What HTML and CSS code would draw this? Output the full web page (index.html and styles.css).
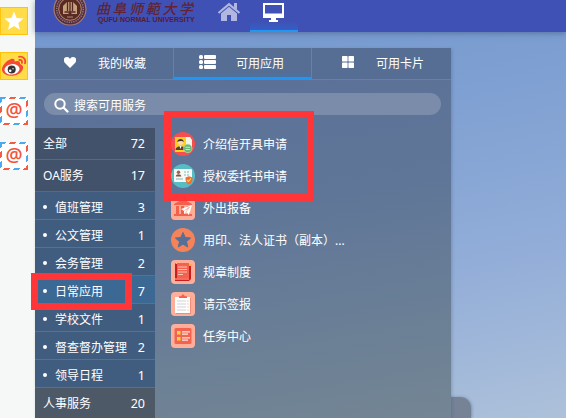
FILE: index.html
```html
<!DOCTYPE html>
<html lang="zh-CN">
<head>
<meta charset="utf-8">
<title>曲阜师范大学</title>
<link rel="stylesheet" href="styles.css">
</head>
<body>
<aside class="rail">
  <svg class="tile" viewBox="0 0 28 28"><rect x=".5" y=".5" width="27" height="27" fill="#ffdc48" stroke="#ffc20d"/><path d="M14 4.500l2.700 6.400 6.800.5-5.200 4.500 1.600 6.800-5.900-3.600-5.900 3.600 1.600-6.800-5.200-4.500 6.800-.5z" fill="#fff"/></svg>
  <svg class="tile" viewBox="0 0 28 28"><rect x=".5" y=".5" width="27" height="27" fill="#ffdc48" stroke="#ffc20d"/><path d="M11 7c2.500-1 4 .3 3.600 2.600 3-1.200 6-.8 5.400 2.400 3 1 4 3.300 2.500 6-2 4-7 6-12 5.700C5 23.500 1.500 20.500 2 16.800 2.600 12.800 7 8.300 11 7z" fill="#f44c32"/><ellipse cx="12" cy="17.300" rx="7.600" ry="5.200" fill="#fff" transform="rotate(-8 12 17.300)"/><circle cx="11.700" cy="17.500" r="4" fill="#333"/><circle cx="10.200" cy="18.800" r="1.300" fill="#fff"/><circle cx="13" cy="16.800" r=".7" fill="#fff"/><path d="M19 4.800c4.300-.7 7.200 2.500 6 6.500M19.300 8c2.200-.3 3.200 1 2.600 2.900" fill="none" stroke="#f44c32" stroke-width="1.800" stroke-linecap="round"/></svg>
  <div class="mail">@</div>
  <div class="mail">@</div>
</aside>
<div class="app">
  <header class="top">
    <svg class="seal" viewBox="0 0 34 34"><circle cx="17" cy="17" r="16" fill="#542b42" stroke="#a77b6a" stroke-width="1.200"/><circle cx="17" cy="17" r="13.300" fill="none" stroke="#95766b" stroke-width="1.500" stroke-dasharray="1.300 1"/><circle cx="17" cy="17" r="11.300" fill="#5a2922" stroke="#b18b70" stroke-width="1"/><path d="M10 22V14l4-4h6l4 4v8h-5l-2-2-2 2z" fill="#c7a17c"/><path d="M14.500 10v9M19.500 10v9M17 9v12M11.500 20h11" stroke="#552922" stroke-width="1.300"/><path d="M14 25h6" stroke="#b18b70"/></svg>
    <div class="brand"><div class="brand-cn">曲阜师範大学</div><div class="brand-en">QUFU NORMAL UNIVERSITY</div></div>
    <nav class="views">
      <a class="view"><svg class="home" viewBox="0 0 24 20"><path d="M1.500 11L12 2.200 22.500 11" fill="none" stroke="#b1b7e0" stroke-width="2.200"/><path d="M17 1h3v7l-3-2.500z" fill="#b1b7e0"/><path d="M4 11.500l8-6.700 8 6.700V19h-6v-6h-4v6H4z" fill="#b1b7e0"/></svg></a>
      <a class="view view-on"><svg class="screen" viewBox="0 0 21 19"><path fill="#fff" fill-rule="evenodd" d="M0 0h21v15h-8v2h2v2H6v-2h2v-2H0zM2 2v8.500h17V2z"/></svg></a>
    </nav>
  </header>
  <main class="stage">
    <div class="drawer"></div>
    <section class="panel">
      <div class="tabs">
        <div class="tab"><svg class="tab-icon heart" viewBox="0 0 12 11"><path d="M6 11L1 6C-1.300 3 0 .2 2.800.1 4.500 0 5.400.8 6 2 6.600.8 7.500 0 9.200.1 12 .2 13.300 3 11 6z" fill="#fff"/></svg><span>我的收藏</span></div>
        <div class="tab tab-on"><svg class="tab-icon bars" viewBox="0 0 17 14"><g fill="#fff"><rect width="4" height="4" rx="1.500"/><rect x="5" width="12" height="4" rx="1"/><rect y="5" width="4" height="4" rx="1.500"/><rect x="5" y="5" width="12" height="4" rx="1"/><rect y="10" width="4" height="4" rx="1.500"/><rect x="5" y="10" width="12" height="4" rx="1"/></g></svg><span>可用应用</span></div>
        <div class="tab"><svg class="tab-icon grid" viewBox="0 0 12 12"><g fill="#fff"><rect width="5.600" height="5.600" rx=".7"/><rect x="6.400" width="5.600" height="5.600" rx=".7"/><rect y="6.400" width="5.600" height="5.600" rx=".7"/><rect x="6.400" y="6.400" width="5.600" height="5.600" rx=".7"/></g></svg><span>可用卡片</span></div>
      </div>
      <div class="search"><svg class="glass" viewBox="0 0 15 15"><circle cx="6" cy="6" r="4.700" fill="none" stroke="#fff" stroke-width="2"/><path d="M9.500 9.500L13.500 13.500" stroke="#fff" stroke-width="2.300" stroke-linecap="round"/></svg><span>搜索可用服务</span></div>
      <div class="body">
        <ul class="cats">
          <li class="cat"><span>全部</span><b>72</b></li>
          <li class="cat"><span>OA服务</span><b>17</b></li>
          <li class="cat sub"><span>值班管理</span><b>3</b></li>
          <li class="cat sub"><span>公文管理</span><b>1</b></li>
          <li class="cat sub"><span>会务管理</span><b>2</b></li>
          <li class="cat sub cat-on"><span>日常应用</span><b>7</b></li>
          <li class="cat sub"><span>学校文件</span><b>1</b></li>
          <li class="cat sub"><span>督查督办管理</span><b>2</b></li>
          <li class="cat sub"><span>领导日程</span><b>1</b></li>
          <li class="cat last"><span>人事服务</span><b>20</b></li>
        </ul>
        <ul class="apps">
          <li class="item"><svg viewBox="0 0 24 24"><circle cx="12" cy="12" r="12" fill="#f44e50"/><path d="M15 5h4l2 3v9h-6z" fill="#f3f5e8"/><rect x="4" y="5" width="11" height="15" fill="#fbd119"/><circle cx="9.500" cy="10" r="3" fill="#ffd5ac"/><path d="M6.300 10c-.3-4 6.700-4 6.400 0-1-1.500-4.500-1.500-6.400 0z" fill="#4c2d27"/><path d="M4.500 18c0-5 10-5 10 0z" fill="#5c3c36"/><path d="M8.500 14h2l-1 3z" fill="#fff"/><circle cx="16.800" cy="16.500" r="4.200" fill="#65b878" stroke="#b2dba8" stroke-width=".8"/><path d="M14.500 15.300h4.600M14.500 17.500h4.600" stroke="#c6e8cb"/></svg><span>介绍信开具申请</span></li>
          <li class="item"><svg viewBox="0 0 24 24"><circle cx="12" cy="12" r="12" fill="#58bcc5"/><rect x="3" y="5" width="18" height="13" rx="1" fill="#f5faf7"/><circle cx="7.500" cy="8.300" r="1.700" fill="#a3623e"/><path d="M4.800 12.500c0-3 5.500-3 5.500 0z" fill="#89513a"/><path d="M13 8h2m1 0h2M13 11h2m1 0h2M5 15h7" stroke="#a8cdd1" stroke-width="1.300"/><path d="M18 12.300l3.500 1.300c.2 4-1 6-3.500 7-2.500-1-3.700-3-3.500-7z" fill="#f26e2f"/><path d="M16 16l1.500 1.500 2.500-3" fill="none" stroke="#fde052" stroke-width="1.100"/></svg><span>授权委托书申请</span></li>
          <li class="item"><svg viewBox="0 0 24 24"><rect width="24" height="24" rx="4" fill="#ffac96"/><path d="M3 8l9-5 9 5v1H3zM5 10h3v8H5zM10 10h3v8h-3zM16 10h3v8h-3zM3 18h18v2H3z" fill="#f3604c"/><path d="M10 13l11-4-3 10-3-3-2 2v-3z" fill="#fff"/><path d="M13.500 14.500l5-3.500-3.500 5" fill="none" stroke="#f69b87" stroke-width=".7"/></svg><span>外出报备</span></li>
          <li class="item"><svg viewBox="0 0 24 24"><circle cx="12" cy="12" r="12" fill="#f4835a"/><path d="M12 4.500l2.200 5 5.400.5-4.100 3.600 1.200 5.400-4.700-2.900L7.300 19l1.200-5.400L4.400 10l5.400-.5z" fill="#556f96" stroke="#556f96" stroke-linejoin="round"/></svg><span>用印、法人证书（副本）...</span></li>
          <li class="item"><svg viewBox="0 0 24 24"><rect width="24" height="24" rx="4" fill="#ffae99"/><path d="M5 4h15v15l-2 2H4V3z" fill="#ca1d1e"/><path d="M6 3h12v15H6z" fill="#f4614e"/><path d="M4 19h14" stroke="#ff8a71" stroke-width="1.500"/><path d="M7 7h9M7 9.500h9M7 12h9M7 14.500h5" stroke="#ffc3b1"/><path d="M18 4h3v2h-3z" fill="#ffb534"/></svg><span>规章制度</span></li>
          <li class="item"><svg viewBox="0 0 24 24"><rect width="24" height="24" rx="4" fill="#ffae99"/><rect x="5" y="6" width="15" height="16" fill="#f38d79"/><rect x="4" y="5" width="15" height="16" fill="#fff"/><path d="M8 6V4.300h2L12 2l2 2.300h2V6z" fill="#f3614a"/><path d="M6 9h9M6 12h9M6 15h9M6 18h9" stroke="#d1d0d3" stroke-width="1.200"/><path d="M16.500 9h1M16.500 12h1M16.500 15h1M16.500 18h1" stroke="#f99784" stroke-width="1.200"/></svg><span>请示签报</span></li>
          <li class="item"><svg viewBox="0 0 24 24"><rect width="24" height="24" rx="4" fill="#ffae99"/><rect x="3.500" y="4" width="17" height="16" rx="1.500" fill="#f36350"/><path d="M6 7h3.500v3.500H6zM6 13h3.500v3.500H6z" fill="#ffd738"/><path d="M11 7.800h8M11 10.200h6M11 13.800h8M11 16.200h6" stroke="#ffe5dc" stroke-width="1.200"/></svg><span>任务中心</span></li>
        </ul>
      </div>
    </section>
  </main>
</div>
<div class="mark mark-apps"></div>
<div class="mark mark-cat"></div>
</body>
</html>
```
FILE: styles.css
```css
* { box-sizing: border-box; }
body {
  margin: 0;
  width: 566px;
  height: 418px;
  display: flex;
  position: relative;
  overflow: hidden;
  font: 12px/16px "Noto Sans", "Noto Sans CJK SC", sans-serif;
  color: #fff;
}
ul { list-style: none; margin: 0; padding: 0; }
.rail {
  width: 35px;
  padding-top: 7px;
  background: #f5f8f6;
  display: flex;
  flex-direction: column;
  gap: 17px;
}
.tile { width: 28px; height: 28px; flex: none; }
.mail {
  width: 28px;
  height: 28px;
  flex: none;
  border: 2px solid transparent;
  background:
    linear-gradient(#fff, #fff) padding-box,
    repeating-linear-gradient(-45deg, #f35b42 0 4px, #fff 4px 7px, #4ba9ef 7px 11px, #fff 11px 14px) border-box;
  color: #f2553d;
  font: 600 19px/22px "Open Sans", sans-serif;
  display: flex;
  justify-content: center;
}
.app { flex: 1; display: flex; flex-direction: column; min-width: 0; }
.top {
  height: 32px;
  flex: none;
  display: flex;
  background: #3f51b5;
  box-shadow: 0 1px 6px rgba(45, 65, 110, .5);
  z-index: 1;
}
.seal { width: 34px; height: 34px; margin: -8px 0 0 18px; flex: none; }
.brand { width: 98px; margin-left: 11px; color: #632332; white-space: nowrap; }
.brand-cn {
  height: 16px;
  margin-left: -2px;
  font: italic 500 14px/16px "Noto Sans CJK SC", sans-serif;
  letter-spacing: 2.6px;
}
.brand-en {
  font: bold 7px/8px "Liberation Sans", sans-serif;
  letter-spacing: .02px;
  color: #571c2c;
}
.views { display: flex; margin-left: 6px; }
.view { width: 48px; display: flex; justify-content: center; }
.view-on {
  border-bottom: 2px solid #2196f3;
  background: linear-gradient(transparent 72%, rgba(33, 120, 225, .35));
}
.home { width: 24px; height: 20px; margin: 2px 0 0 5px; flex: none; }
.screen { width: 21px; height: 19px; margin: 3px 1px 0 0; }
.stage {
  flex: 1;
  position: relative;
  padding-top: 16px;
  background: linear-gradient(168deg, #7598ce, #7c9ed1 25%, #92add8 65%, #adc1da);
}
.drawer {
  position: absolute;
  left: 380px;
  bottom: 0;
  width: 56px;
  height: 21px;
  border-radius: 0 11px 0 0;
  background: #768396;
  box-shadow: 1px 0 3px rgba(60, 80, 110, .4);
}
.panel {
  position: relative;
  width: 416px;
  height: 370px;
  background: linear-gradient(170deg, #5a6e97, #5f7698 45%, #748694);
  box-shadow: 1px 1px 3px rgba(60, 80, 110, .3);
}
.tabs {
  height: 32px;
  display: grid;
  grid-template-columns: 138px 139px 139px;
  background: #566e93;
  border-bottom: 1px solid #6b7fa2;
}
.tab { display: flex; align-items: center; }
.tab-on {
  border: solid #6b7fa2;
  border-width: 0 1px;
  background:
    linear-gradient(#2196f3, #2196f3) bottom / 100% 2px no-repeat border-box,
    linear-gradient(transparent 75%, rgba(38, 125, 200, .35));
}
.tab-icon { flex: none; margin-bottom: 3px; }
.heart { width: 12px; height: 11px; margin-left: 29px; margin-right: 22px; }
.bars { width: 17px; height: 14px; margin-left: 25px; margin-right: 20px; }
.grid { width: 12px; height: 12px; margin-left: 30px; margin-right: 22px; }
.search {
  width: 397px;
  height: 22px;
  margin: 13px 0 13px 9px;
  padding-left: 10px;
  border-radius: 11px;
  background: #7a8ca9;
  display: flex;
  align-items: center;
  gap: 5px;
}
.glass { width: 15px; height: 15px; margin-top: 3px; }
.search span { margin-top: 4px; }
.body { display: flex; }
.cats { width: 120px; }
.cat {
  height: 32px;
  padding: 1px 10px 0 8px;
  display: flex;
  align-items: center;
  justify-content: space-between;
  background: #43526b;
  border-bottom: 1px solid #566984;
}
.cat b { font-weight: 400; font-size: 12.500px; }
.sub { height: 28px; background: #405d80; border-color: #59718f; padding-top: 5px; }
.sub span::before {
  content: "";
  display: inline-block;
  width: 4px;
  height: 4px;
  margin-right: 8px;
  border-radius: 50%;
  background: #fff;
  vertical-align: 3px;
}
.cat-on { background: #3c6894; }
.last { height: 30px; background: #4e5967; border: 0; padding-top: 2px; }
.apps { padding-left: 16px; }
.item { height: 32px; display: flex; align-items: center; gap: 8px; white-space: nowrap; }
.item span { padding-top: 1px; }
.item svg { width: 24px; height: 24px; flex: none; }
.mark { position: absolute; z-index: 2; border: 7px solid #ff3537; }
.mark-apps { left: 164px; top: 111px; width: 150px; height: 90px; }
.mark-cat { left: 31px; top: 273px; width: 101px; height: 37px; }
```
